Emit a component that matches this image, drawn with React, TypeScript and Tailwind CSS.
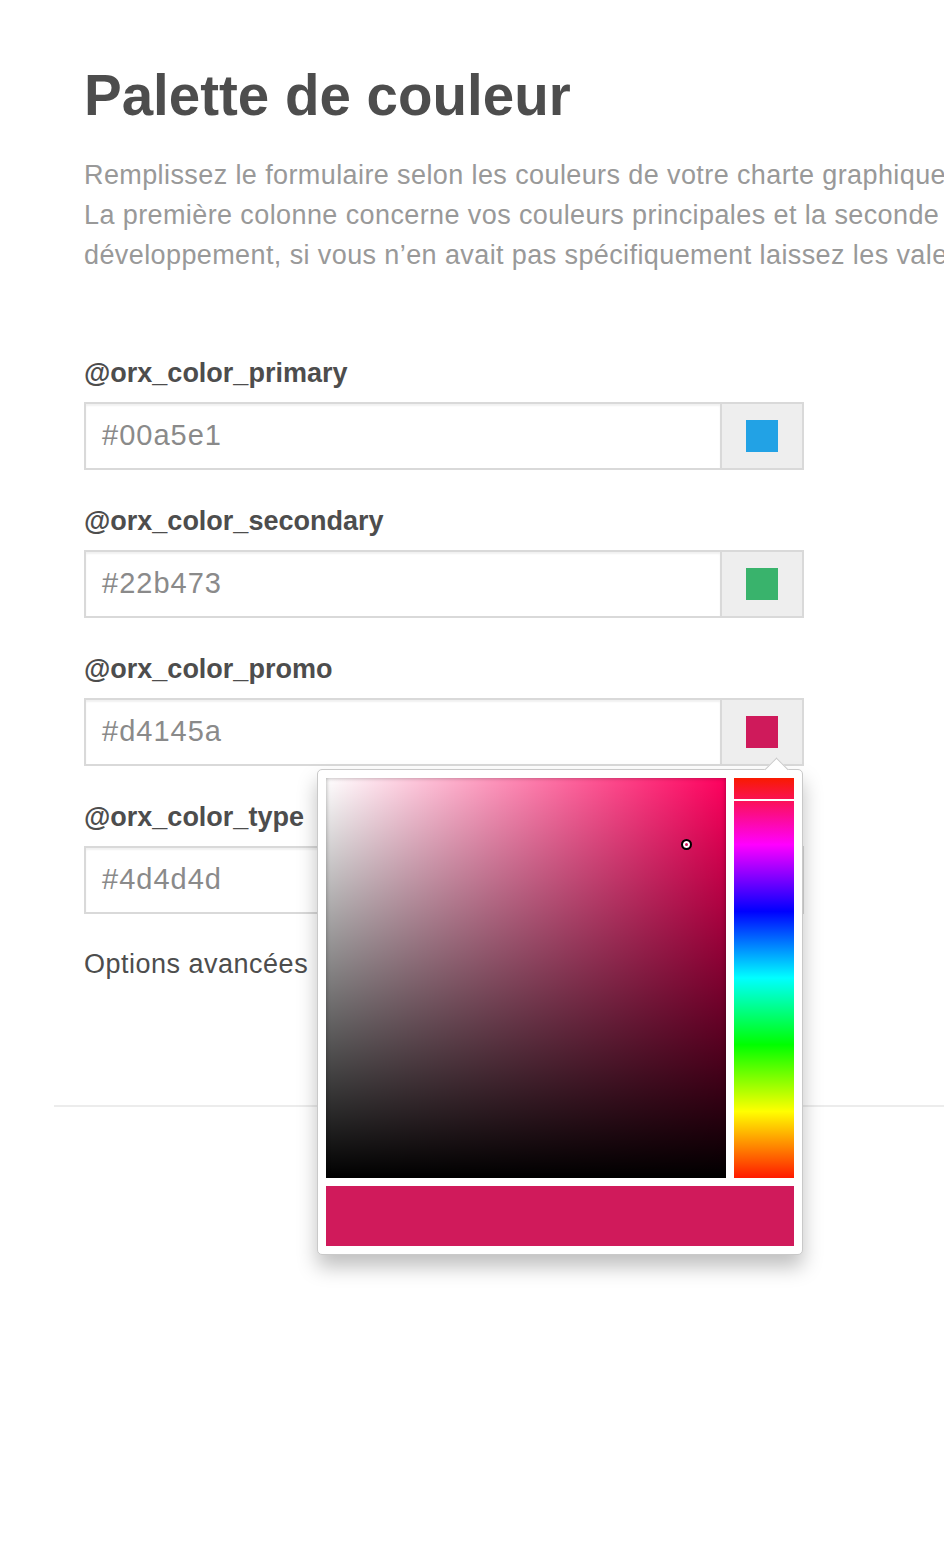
import React from "react";

const fields = [
  { name: "@orx_color_primary", value: "#00a5e1", swatch: "bg-[#22a2e5]" },
  { name: "@orx_color_secondary", value: "#22b473", swatch: "bg-[#39b36c]" },
  { name: "@orx_color_promo", value: "#d4145a", swatch: "bg-[#cf1a5b]", open: true },
  { name: "@orx_color_type", value: "#4d4d4d", swatch: "bg-[#4d4d4d]" },
];

function Picker() {
  return (
    <div className="absolute left-[233px] top-[113px] z-10 w-[486px] rounded-[5px] border border-[#c9c9c9] bg-white p-[8px] shadow-[0_12px_20px_rgba(0,0,0,0.25)]">
      <div className="absolute -top-[9px] left-[450px] h-[17px] w-[17px] rotate-45 border-l border-t border-[#c9c9c9] bg-white" />
      <div className="flex gap-[8px]">
        <div className="relative h-[400px] w-[400px] bg-[#ff005e]">
          <div className="absolute inset-0 bg-linear-to-r from-[#ffffff] to-[rgba(255,255,255,0)]" />
          <div className="absolute inset-0 bg-linear-to-t from-[#000000] to-[rgba(0,0,0,0)]" />
          <div className="absolute inset-0 shadow-[inset_0_0_4px_rgba(0,0,0,0.35)]" />
          <div className="absolute left-[355px] top-[61px] h-[11px] w-[11px] rounded-full border-2 border-black shadow-[inset_0_0_0_2px_#fff]" />
        </div>
        <div className="relative h-[400px] w-[60px] bg-[linear-gradient(to_bottom,#f81a00_0%,#ff00ff_16.67%,#0000ff_33.33%,#00ffff_50%,#00ff00_66.67%,#ffff00_83.33%,#ff1a00_100%)]">
          <div className="absolute left-0 right-0 top-[21px] h-[2px] bg-white" />
        </div>
      </div>
      <div className="mt-[8px] h-[60px] w-full bg-[#d01a5b]" />
    </div>
  );
}

export default function App() {
  return (
    <div className="relative min-h-[1550px] w-[944px] overflow-hidden bg-white font-['Liberation_Sans',Arial,sans-serif]">
      <div className="pl-[84px] pt-[68px]">
        <h1 className="text-[56.5px] font-bold leading-none text-[#4d4d4d]">Palette de couleur</h1>
        <p className="mt-[30px] whitespace-nowrap text-[27px] leading-[40px] tracking-[0.4px] text-[#999999]">
          Remplissez le formulaire selon les couleurs de votre charte graphique.
          <br />
          La première colonne concerne vos couleurs principales et la seconde vos couleurs secondaires.
          <br />
          développement, si vous n’en avait pas spécifiquement laissez les valeurs par défaut.
        </p>
        <div className="mt-[85px] flex w-[720px] flex-col gap-[38px]">
          {fields.map((f) => (
            <div key={f.name} className="relative">
              <div className="mb-[16px] text-[27px] font-bold leading-[26px] text-[#4d4d4d]">{f.name}</div>
              <div className="flex h-[68px] border-2 border-[#d9d9d9] bg-white">
                <div className="flex flex-1 items-center pl-[16px] text-[29px] tracking-[1px] text-[#8a8a8a] shadow-[inset_0_2px_2px_rgba(0,0,0,0.06)]">
                  {f.value}
                </div>
                <div className="flex w-[82px] items-center justify-center border-l-2 border-[#d9d9d9] bg-[#eeeeee]">
                  <div className={`h-[32px] w-[32px] ${f.swatch}`} />
                </div>
              </div>
              {f.open && <Picker />}
            </div>
          ))}
        </div>
        <div className="mt-[37px] text-[27px] leading-[26px] tracking-[0.5px] text-[#4d4d4d]">Options avancées</div>
      </div>
      <div className="ml-[54px] mt-[128px] h-[2px] bg-[#ececec]" />
    </div>
  );
}
